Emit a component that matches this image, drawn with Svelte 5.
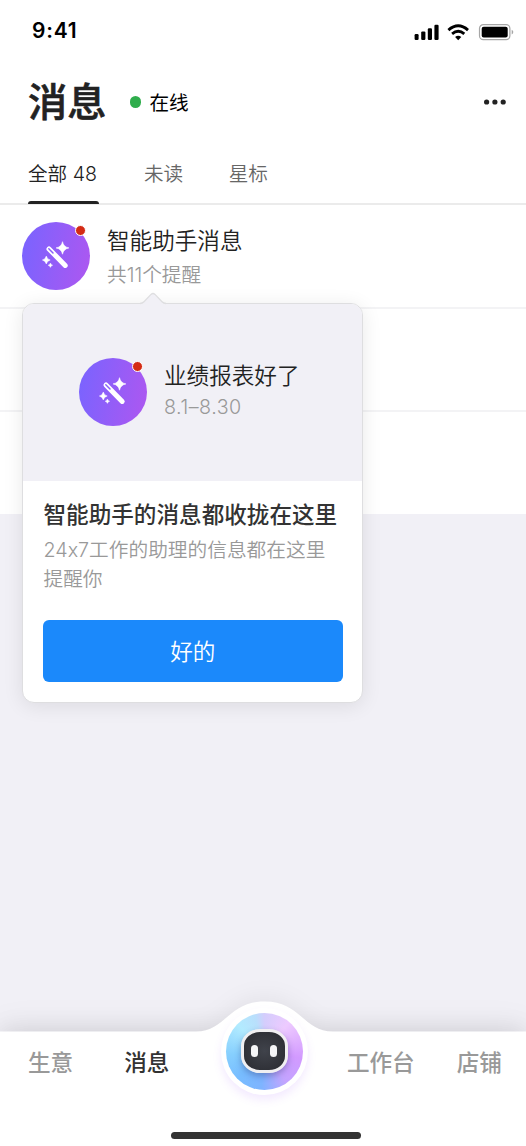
<script>
  let current = 0
  let activeNav = 1
  let showGuide = true

  const tabs = ['全部 48', '未读', '星标']
  const navs = ['生意', '消息', '工作台', '店铺']
</script>

{#snippet avatar()}
  <div class="avatar">
    <svg width="68" height="68" viewBox="0 0 68 68">
      <path d="M27 27 L43.2 43.4" stroke="#fff" stroke-width="5" stroke-linecap="round" />
      <path d="M26.8 26.8 L31 31" stroke="#8a60fb" stroke-width="1.5" stroke-linecap="round" />
      <path d="M40.5 19.7 Q41.4 24.8 46.9 25.9 Q41.4 27 40.5 32.2 Q39.6 27 34.1 25.9 Q39.6 24.8 40.5 19.7Z" fill="#fff" stroke="#fff" stroke-width=".6" />
      <path d="M24.3 34 Q25 37.2 28.2 38 Q25 38.8 24.3 42 Q23.6 38.8 20.4 38 Q23.6 37.2 24.3 34Z" fill="#fff" stroke="#fff" stroke-width=".5" />
      <path d="M28.4 41 Q28.9 42.7 30.7 43.2 Q28.9 43.7 28.4 45.4 Q27.9 43.7 26.1 43.2 Q27.9 42.7 28.4 41Z" fill="#fff" stroke="#fff" stroke-width=".4" />
    </svg>
    <span class="dot"></span>
  </div>
{/snippet}

<div class="app">
  <div class="status">
    <span class="time">9:41</span>
    <svg width="100" height="18" viewBox="0 0 100 18">
      <rect x=".6" y="10" width="4" height="6" rx="1.2" />
      <rect x="7.2" y="7.4" width="4.2" height="8.6" rx="1.2" />
      <rect x="13.8" y="4.2" width="4.2" height="11.8" rx="1.2" />
      <rect x="20.4" y=".8" width="4.2" height="15.2" rx="1.2" />
      <g fill="none" stroke="#000" stroke-width="2.9">
        <path d="M34.4 6.1 Q44.2 -2.4 54 6.1" />
        <path d="M38.1 9.8 Q44.2 4.9 50.3 9.8" />
      </g>
      <path d="M41.1 12.9 Q44.2 10.6 47.3 12.9 L44.2 16.2Z" />
      <rect x="65.5" y=".6" width="30.4" height="15" rx="3.8" fill="none" stroke="#a6a6a6" stroke-width="1.2" />
      <rect x="67.7" y="2.8" width="26" height="10.6" rx="2" />
      <path d="M97.7 5.7 Q99.3 6.4 99.3 8.1 Q99.3 9.8 97.7 10.5Z" fill="#a6a6a6" />
    </svg>
  </div>

  <header>
    <h1>消息</h1>
    <span class="online"></span>
    <span class="state">在线</span>
    <svg class="more" width="24" height="8" viewBox="0 0 24 8">
      <circle cx="3.6" cy="4" r="2.6" />
      <circle cx="11.9" cy="4" r="2.6" />
      <circle cx="20.2" cy="4" r="2.6" />
    </svg>
  </header>

  <div class="tabs">
    {#each tabs as tab, i}
      <button class="tab" class:active={current === i} on:click={() => current = i}>{tab}</button>
    {/each}
  </div>

  <div class="list">
    <div class="row">
      {@render avatar()}
      <div class="info">
        <div class="name">智能助手消息</div>
        <div class="sub">共11个提醒</div>
      </div>

      {#if showGuide}
        <div class="guide">
          <svg class="arrow" width="30" height="13" viewBox="0 0 30 13">
            <path d="M2 13 V11.5 Q4.4 11.3 6 9.7 L13 2.4 Q15 .6 17 2.4 L24 9.7 Q25.6 11.3 28 11.5 V13Z" fill="#f1f0f6" />
            <path d="M2 11.5 Q4.4 11.3 6 9.7 L13 2.4 Q15 .6 17 2.4 L24 9.7 Q25.6 11.3 28 11.5" fill="none" stroke="#dedee0" stroke-width="1.3" />
          </svg>
          <div class="preview">
            {@render avatar()}
            <div class="info">
              <div class="name">业绩报表好了</div>
              <div class="sub date">8.1–8.30</div>
            </div>
          </div>
          <div class="content">
            <h2>智能助手的消息都收拢在这里</h2>
            <p>24x7工作的助理的信息都在这里提醒你</p>
            <button class="ok" on:click={() => showGuide = false}>好的</button>
          </div>
        </div>
      {/if}
    </div>
    <div class="row"></div>
    <div class="row"></div>
  </div>

  <nav>
    <svg class="bump" width="526" height="152" viewBox="0 0 526 152">
      <path d="M0 152 V37.5 H196 C226 37.5 228 7.5 264.5 7.5 C301 7.5 303 37.5 333 37.5 H526 V152Z" fill="#fff" />
    </svg>
    {#each navs as item, i}
      <button class="nav-item" class:active={activeNav === i} on:click={() => activeNav = i}>{item}</button>
      {#if i === 1}
        <div class="robot">
          <div class="orb">
            <div class="head">
              <i></i><i></i>
            </div>
          </div>
        </div>
      {/if}
    {/each}
    <div class="home"></div>
  </nav>
</div>

<style>
  :global(body) {
    margin: 0;
    background: #fff;
  }

  .app {
    display: flex;
    flex-direction: column;
    width: 526px;
    height: 1146px;
    overflow: hidden;
    background: #f1f0f6;
    color: #222;
    font-family: Inter, "Noto Sans CJK SC", sans-serif;
    font-weight: 350;
    font-feature-settings: "calt" 0;
  }

  button {
    padding: 0;
    border: 0;
    background: none;
    font-family: inherit;
    font-weight: inherit;
    cursor: pointer;
  }

  .status {
    display: flex;
    justify-content: space-between;
    box-sizing: border-box;
    height: 62px;
    padding: 18px 12px 0 32px;
    background: #fff;
  }

  .status svg {
    margin-top: 6px;
  }

  .time {
    line-height: 26px;
    font-size: 21px;
    font-weight: 600;
    color: #000;
    letter-spacing: .8px;
  }

  header {
    display: flex;
    align-items: center;
    height: 80px;
    padding: 0 19px 0 28px;
    background: #fff;
  }

  h1 {
    width: 78px;
    margin: 0;
    font-size: 39.2px;
    line-height: 56px;
    font-weight: 500;
    white-space: nowrap;
    -webkit-text-stroke: .6px #222;
  }

  .online {
    width: 11.5px;
    height: 11.5px;
    margin: 0 8.5px 0 23.5px;
    border-radius: 50%;
    background: #2fad4c;
  }

  .state {
    margin-top: -2px;
    font-size: 19.6px;
    font-weight: 400;
    color: #000;
  }

  .more {
    margin-left: auto;
    fill: #222;
  }

  .tabs {
    display: flex;
    gap: 45.5px;
    box-sizing: border-box;
    height: 63px;
    padding-left: 28px;
    border-bottom: 2px solid #ebebeb;
    background: #fff;
  }

  .tab {
    position: relative;
    height: 61px;
    padding-bottom: 1px;
    font-size: 19.6px;
    color: #666;
  }

  .tab.active {
    width: 70.5px;
    text-align: left;
    white-space: nowrap;
    color: #222;
  }

  .tab.active::after {
    content: '';
    position: absolute;
    left: 0;
    right: 0;
    bottom: -1px;
    height: 3px;
    border-radius: 3px 3px 0 0;
    background: #222;
  }

  .row {
    position: relative;
    display: flex;
    gap: 17px;
    box-sizing: border-box;
    height: 103.5px;
    padding: 17px 22px;
    border-bottom: 2px solid #f3f3f5;
    background: #fff;
  }

  .row:last-child {
    height: 102px;
    border: 0;
  }

  .avatar {
    position: relative;
    flex: none;
    width: 68px;
    height: 68px;
    border-radius: 50%;
    background: linear-gradient(100deg, #7864ff, #ae57f0);
  }

  .avatar svg {
    display: block;
  }

  .dot {
    position: absolute;
    top: 3px;
    right: 4.5px;
    width: 9px;
    height: 9px;
    border: 1.4px solid #fff;
    border-radius: 50%;
    background: #d42b14;
  }

  .name {
    margin-top: 2px;
    font-size: 22.6px;
    line-height: 34px;
  }

  .sub {
    font-size: 19.7px;
    line-height: 34px;
    color: #999;
  }

  .guide {
    position: absolute;
    z-index: 2;
    top: 98px;
    left: 22px;
    box-sizing: border-box;
    width: 341px;
    height: 400px;
    border: 1.4px solid #dedee0;
    border-radius: 12px;
    background: #fff;
    box-shadow: 0 3px 20px rgba(0, 0, 0, .09);
  }

  .arrow {
    position: absolute;
    top: -12px;
    left: 115px;
  }

  .preview {
    display: flex;
    gap: 17px;
    box-sizing: border-box;
    height: 177px;
    padding: 54px 0 0 56px;
    border-radius: 11px 11px 0 0;
    background: #f1f0f6;
  }

  .preview .name {
    margin-top: 1px;
  }

  .preview .sub {
    line-height: 28px;
  }

  .date {
    letter-spacing: .5px;
  }

  .content {
    padding: 17px 19.5px 0 20px;
  }

  h2 {
    margin: 0 0 0 .5px;
    font-size: 22.6px;
    line-height: 34px;
    font-weight: 500;
    white-space: nowrap;
    color: #333;
  }

  p {
    margin: 4px 0 26.5px .5px;
    font-size: 19.7px;
    line-height: 28.5px;
    color: #999;
  }

  .ok {
    width: 100%;
    height: 62.5px;
    border-radius: 6px;
    background: #1b89fb;
    font-size: 22.6px;
    color: #fff;
  }

  nav {
    position: relative;
    display: flex;
    align-items: flex-start;
    box-sizing: border-box;
    height: 114.5px;
    margin-top: auto;
    padding: 14px 0 0 28px;
    background: #fff;
    box-shadow: 0 0 34px rgba(0, 0, 0, .1);
  }

  .bump {
    position: absolute;
    left: 0;
    top: -37.5px;
    filter: drop-shadow(0 -5px 10px rgba(0, 0, 0, .05));
  }

  .nav-item {
    position: relative;
    flex: none;
    font-size: 22.6px;
    line-height: 34px;
    font-weight: 500;
    white-space: nowrap;
    color: #999;
  }

  .nav-item:nth-of-type(2) {
    margin-left: 51px;
  }

  .nav-item:nth-of-type(4) {
    margin-left: 42px;
  }

  .nav-item.active {
    color: #333;
  }

  .robot {
    position: relative;
    display: flex;
    align-items: center;
    justify-content: center;
    flex: none;
    width: 87px;
    height: 87px;
    margin: -38px 39px 0 51.5px;
    border-radius: 50%;
    background: #fff;
    box-shadow: 0 5px 8px rgba(160, 90, 255, .13);
  }

  .orb {
    display: flex;
    align-items: center;
    justify-content: center;
    width: 77px;
    height: 77px;
    border-radius: 50%;
    background: conic-gradient(from 0deg, #d4cdfc, #edcaff 40deg, #d29aff 100deg, #c3a4ff 145deg, #7eb4ff 185deg, #78bdff 225deg, #86cffe 265deg, #b2ebff 315deg, #b9dffc 345deg, #d4cdfc);
  }

  .head {
    display: flex;
    align-items: center;
    justify-content: center;
    gap: 12px;
    box-sizing: border-box;
    width: 47px;
    height: 43.5px;
    border: 3.5px solid #f0eff1;
    border-radius: 19px / 17px;
    background: radial-gradient(#40434b, #292a30);
    box-shadow: 0 3px 6px rgba(40, 50, 110, .35);
  }

  .head i {
    width: 7px;
    height: 12px;
    border-radius: 3.5px;
    background: #f5f5f7;
  }

  .home {
    position: absolute;
    left: 171px;
    bottom: 7px;
    width: 190px;
    height: 7px;
    border-radius: 4px;
    background: #333;
  }
</style>
